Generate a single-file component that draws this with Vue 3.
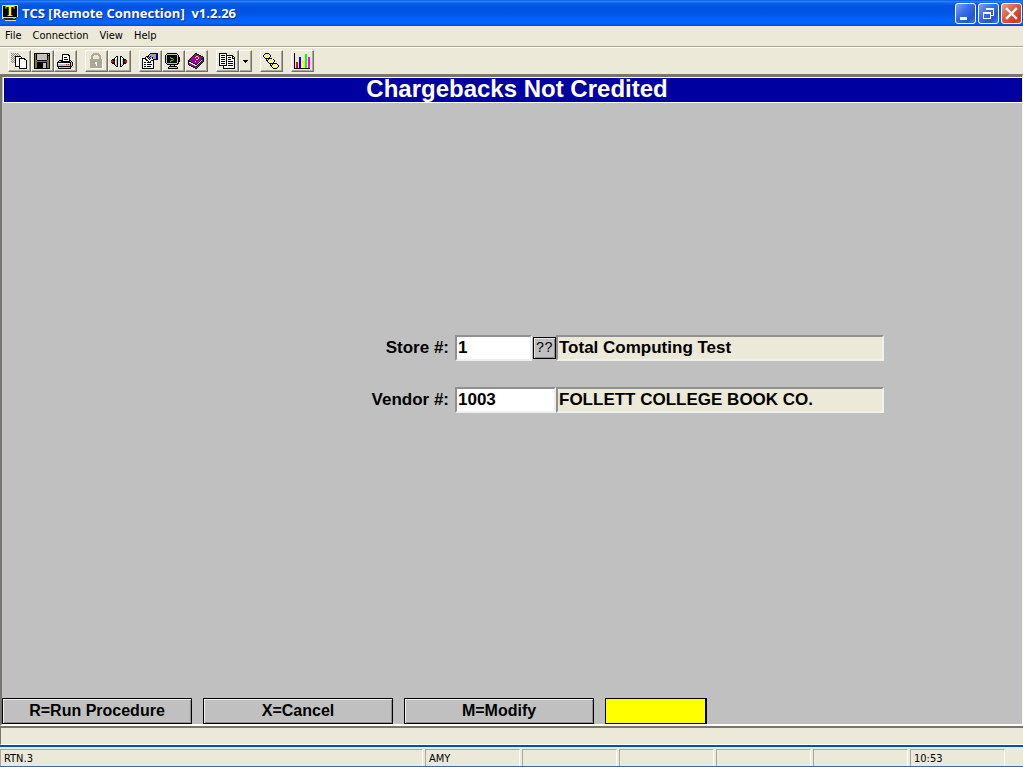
<script setup>
import { ref } from 'vue'

const store = ref('1')
const storeName = ref('Total Computing Test')
const vendor = ref('1003')
const vendorName = ref('FOLLETT COLLEGE BOOK CO.')
const command = ref('')

const palette = {
  K: '#000000', W: '#ffffff', G: '#808080', S: '#c0c0c0', A: '#aca899',
  Y: '#ffff00', O: '#808000', R: '#ff0000', D: '#a01010', N: '#000080',
  B: '#0000ff', L: '#00ff00', M: '#ff00ff', P: '#a000a0', H: '#98a0b0', C: '#ffff80'
}

const art = {
  copy: [
    'G.G.G.G.........', '.G.G.G.G........', 'G.G.G.G.G.......', '.G.GKKKKKK......',
    'G.G.KWWWWWK.....', '.G.GKWWWKKKKKK..', 'G.G.KWWWKWWWWKK.', '.G.GKWWWKWWWWWWK',
    'G.G.KWWWKWWWWWWK', '.G.GKWWWKWWWWWWK', '....KWWWKWWWWWWK', '....KWWWKWWWWWWK',
    '....KWWWKWWWWWWK', '....KKKKKWWWWWWK', '........KWWWWWWK', '........KKKKKKKK'
  ],
  save: [
    'KKKKKKKKKKKKKKKK', 'KOKSSSSSSSSSSKSK', 'KOKSSSSSSSSSSKKK', 'KOKSSSSSSSSSSKOK',
    'KOKSSSSSSSSSSKOK', 'KOKSSSSSSSSSSKOK', 'KOKSSSSSSSSSSKOK', 'KOOKKKKKKKKKKOOK',
    'KOOOOOOOOOOOOOOK', 'KOOKKKKKKKKKKOOK', 'KOOKKKKKKSSSKOOK', 'KOOKKKKKKSSSKOOK',
    'KOOKKKKKKSSSKOOK', 'KOOKKKKKKSSSKOOK', 'KOOKKKKKKSSSKOOK', 'KKKKKKKKKKKKKKKK'
  ],
  print: [
    '................', '.....KKKKKKK....', '.....KWWWWWKK...', '.....KWWWWWWK...',
    '.....KWKKKWWK...', '.....KWWWWWWK...', '.....KWKKKKWK...', '..KKKKWWWWWWKK..',
    '.KSSKKKKKKKKKSK.', 'KKKKKKKKKKKKKKSK', 'KWWWWWWWWWWWWKSK', 'KSSSSSSSSRSRSKSK',
    'KSSSSSSSSSSSSKSK', 'KKKKKKKKKKKKKKK.', '.KSSSSSSSSSSSK..', '.KKKKKKKKKKKKK..'
  ],
  lock: [
    '.....AAAAAA.....', '....AAAAAAAA....', '...AAA....AAA...', '...AA......AA...',
    '...AA......AAW..', '...AA......AAW..', '..AAAAAAAAAAAA..', '..AAAAAAAAAAAAW.',
    '..AAAAAAAAAAAAW.', '..AAAAAWWAAAAAW.', '..AAAAAWWAAAAAW.', '..AAAAAAWAAAAAW.',
    '..AAAAAAWAAAAAW.', '..AAAAAAAAAAAAW.', '..AAAAAAAAAAAAW.', '...WWWWWWWWWWWW.'
  ],
  connect: [
    '................', '................', '................', '.....KK..KK.....',
    '....KWK..KWK....', '...KWWK..KWWK...', '.KKKWSK..KWSKKK.', 'DDKKWSK..KWSKKDD',
    'RRRKWSK..KWSKRRR', 'DDKKWSK..KWSKKDD', '.KKKWSK..KWSKKK.', '...KSSK..KSSK...',
    '....KSK..KSK....', '.....KK..KK.....', '................', '................'
  ],
  properties: [
    '........KKKKKKNN', '.......KHHHHHHNN', '......KHHHHHHHNN', '....KKKHKHHHHHNN',
    '...KWKHKHHKHHHNN', 'KKKKWWKHKWKHHHNN', 'KWWKKWWKWWWKKKNN', 'KWWWKKWWWKKK....',
    'KWWWWWKWKWWK....', 'KWKKWKKKKWWK....', 'KWWWWWWWWWWK....', 'KWKKWKKKKKWK....',
    'KWWWWWWWWWWK....', 'KWKKWKKKKWWK....', 'KWWWWWWWWWWK....', 'KKKKKKKKKKKK....'
  ],
  monitor: [
    '..KKKKKKKKKK....', '.KSSSSSSSSSSK...', 'KSKKKKKKKKKKSK..', 'KSKKKKKKKKKKSK..',
    'KSKKKLKKKKKKSKK.', 'KSKKKKLLKKKKSKK.', 'KSKKKKKKLKKKSKK.', 'KSKKKKLLKKKKSKK.',
    'KSKKKLKKKKKKSKK.', 'KSKKKKKKKKKKSK..', '.KSSSSSSSSSSKK..', '..KKKKKKKKKKK...',
    '.....KSSSK......', '....KKKKKKKK....', '...KSSSSSSSSK...', '...KKKKKKKKKK...'
  ],
  help: [
    '.......KK.......', '......KPPKK.....', '.....KPPPPPKK...', '....KPPPYYPPPKK.',
    '...KPPPYPPYPPPPK', '..KPPPPPPPYPPPKK', '.KPPPPPPYYPPPKPK', 'KPPPPPPPPPPPKSPK',
    'KKKPPPPYPPPKSKPK', 'KWWKKPPPPPKSKPK.', 'KPSWWKKPPKSKPK..', 'KPPPSWWKKSKPK...',
    '.KKPPPSWSKPK....', '...KKPPPKPK.....', '.....KKPPK......', '.......KK.......'
  ],
  report: [
    'KKKKKKKK........', 'KWWWWWWK........', 'KWKKKKWKKKKKKK..', 'KWWWWWWKWWWWWKK.',
    'KWKKKKWKWKKKWKWK', 'KWWWWWWKWWWWWKKK', 'KWKKKKWKWKKKWWWK', 'KWWWWWWKWWWWWWWK',
    'KWKKKKWKWKKKKKWK', 'KWWWWWWKWWWWWWWK', 'KWKKKKWKWKKKKKWK', 'KWWWWWWKWWWWWWWK',
    'KKKKKKKKWKKKKKWK', '....KWWWWWWWWWWK', '....KWWWWWWWWWWK', '....KKKKKKKKKKKK'
  ],
  flow: [
    '..KKKK..........', '.KYWYWK.........', 'KYWYWYWK........', 'KWYWYWYK........',
    '.KWYWYK.........', '..KKKKKKK.......', '...K.KYWYWK.....', '...KKYWYWYWK....',
    '....KWYWYWYK....', '.....KWYWYK.....', '......KKKKKKKK..', '.......K.KYWYWK.',
    '.......KKYWYWYWK', '........KWYWYWYK', '.........KWYWYK.', '..........KKKK..'
  ],
  chart: [
    'K...............', 'K..........LL...', 'K..........LL...', 'K..........LL...',
    'K....BB....LL.MM', 'K....BB....LL.MM', 'K....BB....LL.MM', 'K....BB.YY.LL.MM',
    'K....BB.YY.LL.MM', 'K.RR.BB.YY.LL.MM', 'K.RR.BB.YY.LL.MM', 'K.RR.BB.YY.LL.MM',
    'K.RR.BB.YY.LL.MM', 'K.RR.BB.YY.LL.MM', 'K.RR.BB.YY.LL.MM', 'KKKKKKKKKKKKKKKK'
  ]
}

const toRuns = (rows) => {
  const runs = []
  rows.forEach((row, y) => {
    let x = 0
    while (x < row.length) {
      let end = x + 1
      while (end < row.length && row[end] === row[x]) end++
      if (row[x] !== '.') runs.push({ x, y, w: end - x, fill: palette[row[x]] })
      x = end
    }
  })
  return runs
}

const tool = (name, label) => ({ name, label, runs: toRuns(art[name]) })
const groups = [
  [tool('copy', 'Copy'), tool('save', 'Save'), tool('print', 'Print')],
  [tool('lock', 'Lock'), tool('connect', 'Connect')],
  [tool('properties', 'Properties'), tool('monitor', 'Terminal'), tool('help', 'Help')],
  [tool('report', 'Reports'), { name: 'arrow', label: 'More reports', runs: [] }],
  [tool('flow', 'Workflow')],
  [tool('chart', 'Chart')]
]
const menus = ['File', 'Connection', 'View', 'Help']
const actions = ['R=Run Procedure', 'X=Cancel', 'M=Modify']
const panels = ['RTN.3', 'AMY', '', '', '', '', '10:53']
</script>

<template>
  <div class="window">
    <header class="titlebar">
      <svg class="app-icon" width="17" height="17" viewBox="0 0 17 17" aria-hidden="true">
        <path d="M0 0H16V12H14V16H3V14H0Z" fill="#d8d8d0" />
        <path d="M1 1H15V12H1Z" fill="#000" />
        <path d="M1 13H14V15H3" fill="#222" />
        <path d="M11 13H13V14H11Z" fill="#0c0" />
        <text x="8" y="11" text-anchor="middle" class="app-letter">T</text>
      </svg>
      <h1 class="caption">TCS [Remote Connection]&nbsp; v1.2.26</h1>
      <div class="window-buttons">
        <button class="win-btn" aria-label="Minimize">
          <svg width="19" height="19" viewBox="0 0 19 19"><path d="M4 13H11V16H4Z" fill="#fff" /></svg>
        </button>
        <button class="win-btn" aria-label="Restore">
          <svg width="19" height="19" viewBox="0 0 19 19" fill="none" stroke="#fff" shape-rendering="crispEdges">
            <path d="M7 6V4.5H14.5V11.5H12M7 5.5H14M4.5 8.5H11.5V14.5H4.5ZM4 9.5H12" />
          </svg>
        </button>
        <button class="win-btn close" aria-label="Close">
          <svg width="19" height="19" viewBox="0 0 19 19"><path d="M5 5L14 14M14 5L5 14" stroke="#fff" stroke-width="2.4" stroke-linecap="square" /></svg>
        </button>
      </div>
    </header>

    <nav class="menubar">
      <button v-for="m in menus" :key="m" class="menu">{{ m }}</button>
    </nav>

    <div class="toolbar" role="toolbar">
      <div v-for="(group, i) in groups" :key="i" class="tool-group">
        <button v-for="t in group" :key="t.name" class="tool" :class="{ narrow: t.name === 'arrow' }" :aria-label="t.label">
          <svg v-if="t.name === 'arrow'" width="5" height="3" viewBox="0 0 5 3" shape-rendering="crispEdges">
            <path d="M0 0H5V1H4V2H3V3H2V2H1V1H0Z" />
          </svg>
          <svg v-else width="16" height="16" viewBox="0 0 16 16" shape-rendering="crispEdges">
            <rect v-for="(r, n) in t.runs" :key="n" :x="r.x" :y="r.y" :width="r.w" height="1" :fill="r.fill" />
          </svg>
        </button>
      </div>
    </div>

    <main class="workspace">
      <h2 class="banner">Chargebacks Not Credited</h2>
      <form class="form" @submit.prevent>
        <label for="store">Store #:</label>
        <div class="fields">
          <input id="store" v-model="store" class="field short">
          <button type="button" class="lookup" aria-label="Look up store">??</button>
          <input v-model="storeName" class="field name" aria-label="Store name" readonly>
        </div>
        <label for="vendor">Vendor #:</label>
        <div class="fields">
          <input id="vendor" v-model="vendor" class="field code">
          <input v-model="vendorName" class="field name" aria-label="Vendor name" readonly>
        </div>
      </form>
      <div class="actions">
        <button v-for="a in actions" :key="a" class="action">{{ a }}</button>
        <input v-model="command" class="command" aria-label="Command">
      </div>
    </main>

    <div class="message"></div>
    <footer class="status">
      <span v-for="(p, i) in panels" :key="i" class="panel">{{ p }}</span>
    </footer>
  </div>
</template>

<style>
body {
  margin: 0;
}
</style>

<style scoped>
.window {
  display: flex;
  flex-direction: column;
  height: 100vh;
  overflow: hidden;
  box-sizing: border-box;
  border-bottom: 1px solid #316ac5;
  background: #ece9d8;
  color: #000;
  font: 11px/14px "DejaVu Sans Condensed", "Noto Sans", sans-serif;
}
.window *, .window *::before {
  box-sizing: border-box;
}
button, input {
  margin: 0;
  padding: 0;
  border-radius: 0;
  color: inherit;
  font: inherit;
}
.titlebar {
  display: flex;
  flex: none;
  align-items: center;
  height: 26px;
  padding: 0 1px 0 2px;
  background: linear-gradient(#0058e6 0%, #2f83f5 5%, #0a62ea 12%, #0054e0 25%, #0055e5 50%, #0062fa 75%, #0066ff 88%, #005cf0 94%, #0040c8 100%);
}
.app-icon {
  flex: none;
  margin-right: 3px;
}
.app-letter {
  fill: #ff0;
  font: bold 14px "Liberation Serif", serif;
}
.caption {
  flex: 1;
  margin: 0;
  color: #fff;
  font: bold 13px/18px "Open Sans", sans-serif;
  text-shadow: 1px 1px #0a2f90;
}
.window-buttons {
  display: flex;
  gap: 2px;
}
.win-btn {
  display: grid;
  place-items: center;
  width: 21px;
  height: 21px;
  border: 1px solid #fff;
  border-radius: 3px;
  background: linear-gradient(135deg, #7ba2f5, #3b6fe6 40%, #2055d8 75%, #3f7bf5);
}
.win-btn.close {
  background: linear-gradient(135deg, #f0a088, #e06040 40%, #cc3c18 80%, #d85a30);
}
.menubar {
  display: flex;
  flex: none;
  gap: 11px;
  height: 21px;
  padding: 3px 5px;
  border-bottom: 1px solid #aca899;
}
.menu {
  height: 14px;
  border: 0;
  background: none;
}
.toolbar {
  display: flex;
  flex: none;
  gap: 8px;
  height: 27px;
  padding: 2px 8px;
  border-top: 1px solid #fff;
}
.tool-group {
  display: flex;
}
.tool {
  display: grid;
  place-items: center;
  width: 23px;
  height: 22px;
  padding-right: 1px;
  border: 1px solid #fff;
  border-right-color: #716f64;
  border-bottom-color: #716f64;
  background: #ece9d8;
  box-shadow: inset -1px -1px #aca899;
}
.tool.narrow {
  width: 13px;
}
.workspace {
  display: flex;
  flex: 1;
  flex-direction: column;
  min-height: 0;
  border: solid;
  border-width: 3px 1px 2px 2px;
  border-color: #77756c #f4f3ee #fff #77756c;
  background: #c0c0c0;
}
.banner {
  flex: none;
  height: 26px;
  margin: 0 0 0 1px;
  padding-left: 8px;
  border: 1px solid #fff;
  border-right: 0;
  background: #0000a0;
  color: #fff;
  font: bold 24px/22px "Liberation Sans", sans-serif;
  text-align: center;
}
.form {
  display: grid;
  flex: 1;
  grid-template-columns: 447fr 435fr 138fr;
  grid-template-rows: 232fr 26px 26px 26px 285fr;
  font: bold 17px/20px "Liberation Sans", sans-serif;
}
.form label {
  grid-column: 1;
  padding-top: 3px;
  text-align: right;
}
.form label:nth-of-type(1), .fields:nth-of-type(1) {
  grid-row: 2;
}
.form label:nth-of-type(2), .fields:nth-of-type(2) {
  grid-row: 4;
}
.fields {
  display: flex;
  grid-column: 2;
  align-items: center;
  margin-left: 6px;
}
.field {
  height: 26px;
  padding: 0 1px;
  border: 2px solid;
  border-color: #909090 #f0f0f0 #f0f0f0 #909090;
  background: #fff;
}
.short {
  width: 77px;
}
.code {
  width: 101px;
}
.name {
  flex: 1;
  min-width: 0;
  background: #ece9d8;
}
.lookup {
  width: 23px;
  height: 22px;
  margin: 0 0 0 1px;
  border: 1px solid #000;
  background: #c0c0c0;
  box-shadow: inset 1px 1px #e8e8e8, inset -1px -1px #909090;
  font: 14px/18px "Liberation Mono", monospace;
}
.actions {
  display: flex;
  flex: none;
  gap: 11px;
}
.action {
  width: 190px;
  height: 26px;
  border: 1px solid #000;
  background: #c0c0c0;
  box-shadow: inset 1px 1px #f0f0f0, inset -1px -1px #909090;
  font: bold 16px/20px "Liberation Sans", sans-serif;
}
.command {
  width: 102px;
  height: 26px;
  padding: 0 2px;
  border: 1px solid #000;
  border-right-width: 2px;
  background: #ff0;
  font: bold 16px/20px "Liberation Sans", sans-serif;
}
.message {
  flex: none;
  height: 19px;
  border: solid;
  border-width: 2px 0 1px 1px;
  border-color: #77756c #fff #fff #77756c;
}
.status {
  display: flex;
  flex: none;
  gap: 2px;
  height: 21px;
  padding: 2px 18px 0 0;
  border-top: 2px solid #0a4f9c;
}
.panel {
  flex: none;
  width: 95px;
  padding: 2px 3px;
  border: 1px solid #aca899;
  border-right-color: #fff;
  border-bottom: 0;
}
.panel:first-child {
  flex: 1;
}
</style>
